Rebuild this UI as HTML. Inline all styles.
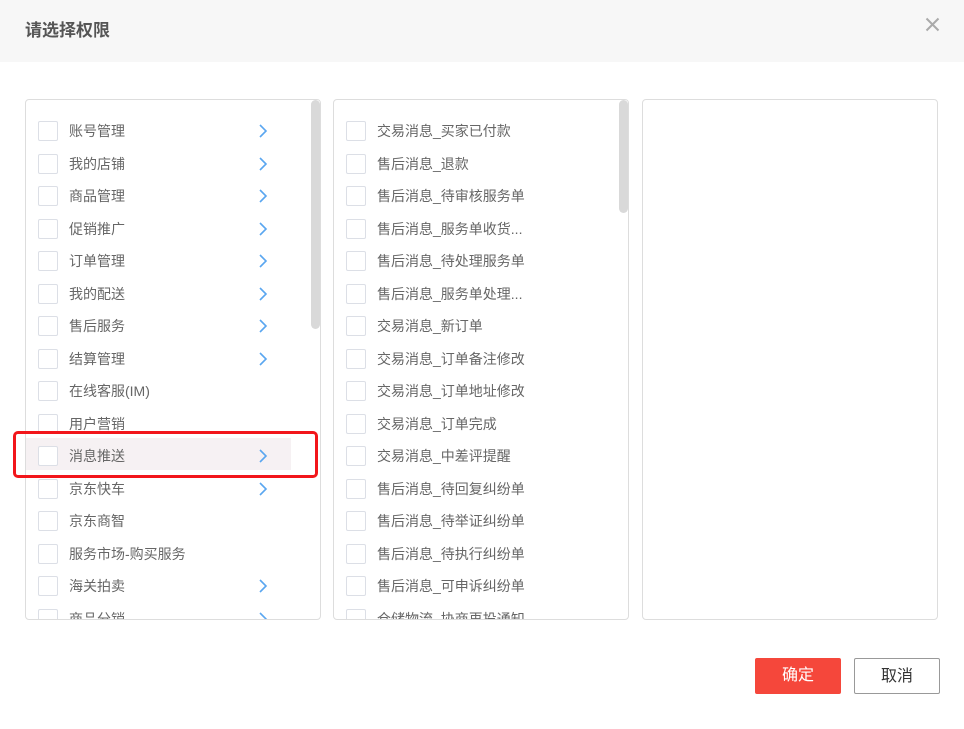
<!DOCTYPE html>
<html><head><meta charset="utf-8"><style>
*{box-sizing:border-box;margin:0;padding:0}
body{width:964px;height:729px;background:#fff;position:relative;overflow:hidden;font-family:"Liberation Sans","Noto Sans CJK SC",sans-serif}
.hd{position:absolute;left:0;top:0;width:964px;height:62px;background:#f7f7f7}
.hd .t{position:absolute;left:25px;top:20px;font-size:17px;font-weight:bold;color:#555;line-height:22px}
.x{position:absolute;left:925px;top:17px}
.panel{position:absolute;top:99px;width:296px;height:521px;border:1px solid #ddd;border-radius:4px;overflow:hidden}
.row{position:absolute;left:0;height:32px;width:266px}
.cb{position:absolute;left:12px;top:6px;width:20px;height:20px;border:1px solid #dcdfe6;border-radius:2px;background:#fff}
.lb{position:absolute;left:43px;top:6px;font-size:14px;color:#666;line-height:20px;white-space:nowrap}
.ar{position:absolute;left:232px;top:9px}
.sb{position:absolute;width:9px;border-radius:5px;background:#d9d9d9}
.red{position:absolute;left:13px;top:431px;width:305px;height:47px;border:3px solid #f2161b;border-radius:5px}
.btn{position:absolute;top:658px;width:86px;height:36px;border-radius:2px;font-size:16px;text-align:center;line-height:36px}
</style></head><body>
<div class="hd"><div class="t">请选择权限</div>
<svg class="x" width="15" height="15" viewBox="0 0 15 15"><path d="M1.5 1.5L13.5 13.5M13.5 1.5L1.5 13.5" stroke="#aaa" stroke-width="2"/></svg></div>

<div class="panel" style="left:25px">
<div style="position:absolute;left:0;top:338px;width:265px;height:32px;background:#f6f1f3"></div>
<div class="sb" style="left:285px;top:0;height:229px"></div>
<div id="p1"></div>
</div>
<div class="panel" style="left:333px">
<div class="sb" style="left:285px;top:0;height:113px"></div>
<div id="p2"></div>
</div>
<div class="panel" style="left:642px"></div>
<div class="red"></div>
<div class="btn" style="left:755px;background:#f5473b;color:#fff">确定</div>
<div class="btn" style="left:854px;border:1px solid #999;color:#333">取消</div>
<script>
var arrow='<svg class="ar" width="10" height="14" viewBox="0 0 10 14"><path d="M2 1L8 7L2 13" fill="none" stroke="#5aa6f0" stroke-width="1.6"/></svg>';
var a=[["账号管理",1],["我的店铺",1],["商品管理",1],["促销推广",1],["订单管理",1],["我的配送",1],["售后服务",1],["结算管理",1],["在线客服(IM)",0],["用户营销",0],["消息推送",1],["京东快车",1],["京东商智",0],["服务市场-购买服务",0],["海关拍卖",1],["商品分销",1]];
var b=["交易消息_买家已付款","售后消息_退款","售后消息_待审核服务单","售后消息_服务单收货...","售后消息_待处理服务单","售后消息_服务单处理...","交易消息_新订单","交易消息_订单备注修改","交易消息_订单地址修改","交易消息_订单完成","交易消息_中差评提醒","售后消息_待回复纠纷单","售后消息_待举证纠纷单","售后消息_待执行纠纷单","售后消息_可申诉纠纷单","仓储物流_协商再投通知"];
var h='';a.forEach(function(r,i){h+='<div class="row" style="top:'+(15+i*32.5)+'px"><div class="cb"></div><div class="lb">'+r[0]+'</div>'+(r[1]?arrow:'')+'</div>';});
document.getElementById('p1').innerHTML=h;
h='';b.forEach(function(r,i){h+='<div class="row" style="top:'+(15+i*32.5)+'px"><div class="cb"></div><div class="lb">'+r+'</div></div>';});
document.getElementById('p2').innerHTML=h;
</script>
</body></html>
